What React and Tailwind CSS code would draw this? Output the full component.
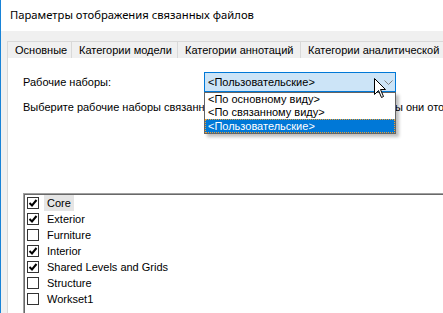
import React from 'react';

const uiFont = { fontFamily: '"Liberation Sans", Arial, sans-serif' };
const titleFont = { fontFamily: '"Noto Sans", "Liberation Sans", sans-serif' };

const worksets = [
  { name: 'Core', checked: true, hover: true },
  { name: 'Exterior', checked: true },
  { name: 'Furniture', checked: false },
  { name: 'Interior', checked: true },
  { name: 'Shared Levels and Grids', checked: true },
  { name: 'Structure', checked: false },
  { name: 'Workset1', checked: false },
];

const tabs = [
  { label: 'Основные', w: 'w-[64px]' },
  { label: 'Категории модели', w: 'w-[106px]' },
  { label: 'Категории аннотаций', w: 'w-[123px]' },
  { label: 'Категории аналитической', w: 'w-[150px]' },
];

const CheckBox = ({ checked }) => (
  <div className="w-[12px] h-[12px] border border-[#333333] bg-white flex items-center justify-center shrink-0">
    {checked && (
      <svg width="10" height="10" viewBox="0 0 10 10">
        <path d="M1.5 5 L4 7.5 L8.5 2" fill="none" stroke="#000" strokeWidth="2" />
      </svg>
    )}
  </div>
);

const Cursor = () => (
  <svg className="absolute left-[170px] top-[6px] z-20" width="13" height="21" viewBox="0 0 13 21">
    <path
      d="M0.5 0.5 L0.5 16.5 L4.5 12.5 L7.5 19.5 L9.5 18.5 L6.5 11.5 L11.5 11.5 Z"
      fill="#fff"
      stroke="#000"
      strokeWidth="1"
    />
  </svg>
);

export default function App() {
  return (
    <div
      className="w-[443px] h-[313px] overflow-hidden bg-[#f0f0f0] border-l border-[#1883d7] flex flex-col text-[11px] text-black"
      style={uiFont}
    >
      {/* Title bar */}
      <div className="h-[31px] bg-white flex items-center pl-[9px] shrink-0 text-[11.25px]" style={titleFont}>
        Параметры отображения связанных файлов
      </div>

      {/* Tabs */}
      <div className="pt-[10px] pl-[6px] flex flex-col flex-1">
        <div className="flex h-[17px] shrink-0">
          {tabs.map((t) => (
            <div
              key={t.label}
              className={`${t.w} shrink-0 border-t border-l border-[#d9d9d9] flex items-center pl-[7px] whitespace-nowrap`}
            >
              {t.label}
            </div>
          ))}
        </div>

        {/* Panel */}
        <div className="flex-1 bg-white border-l border-[#d9d9d9] pl-[15px] pt-[14px] flex flex-col">
          <div className="flex items-center h-[20px]">
            <div className="w-[181px] shrink-0 whitespace-nowrap">Рабочие наборы:</div>
            <div className="relative w-[192px] h-[20px] shrink-0 z-10">
              <div className="h-full border border-[#0078d7] bg-[#cce4f7] flex items-center pl-[3px]">
                &lt;Пользовательские&gt;
                <svg className="absolute right-[3px] top-[8px]" width="9" height="5" viewBox="0 0 9 5">
                  <path d="M0.5 0.5 L4.5 4.5 L8.5 0.5" fill="none" stroke="#808080" strokeWidth="1" />
                </svg>
              </div>
              <Cursor />
              <div className="absolute left-0 top-[20px] w-[192px] h-[42px] bg-white border border-[#646464] shadow-[3px_3px_3px_rgba(0,0,0,0.25)] flex flex-col leading-[13px]">
                <div className="h-[13px] pl-[3px] whitespace-nowrap">&lt;По основному виду&gt;</div>
                <div className="h-[13px] pl-[3px] whitespace-nowrap">&lt;По связанному виду&gt;</div>
                <div className="h-[14px] pl-[2px] whitespace-nowrap bg-[#0078d7] text-white border border-dotted border-[#f0a030]">
                  &lt;Пользовательские&gt;
                </div>
              </div>
            </div>
          </div>

          <div className="mt-[7px] whitespace-nowrap leading-[16px]">
            Выберите рабочие наборы связанной модели, которые видимые, если бы они отображались в основной модели.
          </div>

          {/* Workset list */}
          <div className="mt-[78px] w-[430px] flex-1 border-t border-l border-[#a0a0a0]">
            <div className="h-full border-t border-l border-[#696969] flex flex-col pl-[2px]">
              {worksets.map((w) => (
                <div key={w.name} className="h-[16px] flex items-center shrink-0">
                  <CheckBox checked={w.checked} />
                  <span
                    className={`ml-[5px] px-[3px] h-[16px] flex items-center whitespace-nowrap ${w.hover ? 'bg-[#e5e5e5]' : ''}`}
                  >
                    {w.name}
                  </span>
                </div>
              ))}
            </div>
          </div>
        </div>
      </div>
    </div>
  );
}
